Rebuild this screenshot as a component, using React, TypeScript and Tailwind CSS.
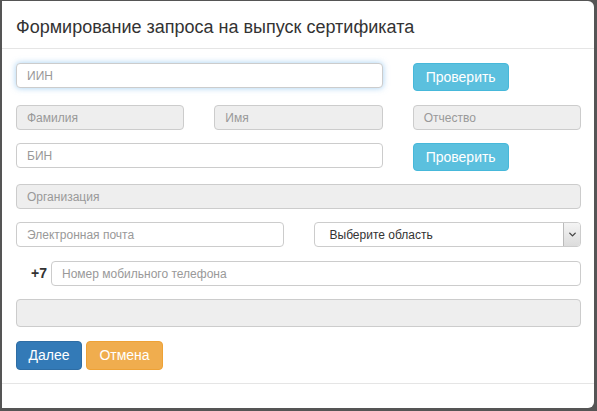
import { ChevronDown } from 'lucide-react';

const font = { fontFamily: '"Liberation Sans", Arial, sans-serif' };

function Field({ placeholder, disabled, focus, className = '' }: { placeholder?: string; disabled?: boolean; focus?: boolean; className?: string }) {
    return (
        <div
            className={
                'h-[25px] rounded-[4px] border px-[10px] flex items-center text-[12px] text-[#999] ' +
                (disabled ? 'bg-[#eeeeee] border-[#cccccc] ' : 'bg-white border-[#cccccc] ') +
                (focus ? 'border-[#66afe9] shadow-[0_0_6px_rgba(102,175,233,0.6)] ' : '') +
                className
            }
        >
            {placeholder}
        </div>
    );
}

function CheckButton() {
    return (
        <button className="w-[96px] h-[28px] rounded-[4px] bg-[#5bc0de] border border-[#46b8da] text-white text-[14px]">
            Проверить
        </button>
    );
}

export default function App() {
    return (
        <div className="w-[597px] h-[411px] bg-[#555555] pt-[1px] pl-[2px]" style={font}>
            <div className="w-[592px] h-[407px] bg-white rounded-r-[6px] flex flex-col">
                {/* Header */}
                <div className="h-[48px] border-b border-[#e5e5e5] flex items-center pl-[14px] pt-[5px]">
                    <h4 className="text-[18px] text-[#333333]">Формирование запроса на выпуск сертификата</h4>
                </div>

                {/* Body */}
                <div className="pl-[14px] pr-[13px] pt-[14px] flex flex-col">
                    <div className="grid grid-cols-3 gap-x-[30px] items-start">
                        <Field placeholder="ИИН" focus className="col-span-2" />
                        <CheckButton />
                    </div>
                    <div className="grid grid-cols-3 gap-x-[30px] mt-[14px]">
                        <Field placeholder="Фамилия" disabled />
                        <Field placeholder="Имя" disabled />
                        <Field placeholder="Отчество" disabled />
                    </div>
                    <div className="grid grid-cols-3 gap-x-[30px] items-start mt-[13px]">
                        <Field placeholder="БИН" className="col-span-2" />
                        <CheckButton />
                    </div>
                    <Field placeholder="Организация" disabled className="mt-[13px]" />
                    <div className="grid grid-cols-2 gap-x-[30px] mt-[13px]">
                        <Field placeholder="Электронная почта" />
                        <div className="h-[25px] rounded-[4px] border border-[#cccccc] bg-white flex items-center">
                            <span className="flex-1 pl-[15px] text-[12px] text-[#333333]">Выберите область</span>
                            <span className="w-[17px] h-[23px] border-l border-[#bbbbbb] bg-gradient-to-b from-[#f4f4f4] to-[#dcdcdc] rounded-r-[3px] flex items-center justify-center">
                                <ChevronDown className="w-[11px] h-[11px] text-[#444]" strokeWidth={3} />
                            </span>
                        </div>
                    </div>
                    <div className="flex items-center mt-[14px]">
                        <span className="w-[35px] pr-[4px] text-right text-[14px] font-bold text-[#333333]">+7</span>
                        <Field placeholder="Номер мобильного телефона" className="flex-1" />
                    </div>
                    <div className="h-[28px] rounded-[4px] border border-[#cccccc] bg-[#eeeeee] mt-[13px]" />
                    <div className="flex gap-[4px] mt-[14px]">
                        <button className="w-[66px] h-[29px] rounded-[4px] bg-[#337ab7] border border-[#2e6da4] text-white text-[14px]">
                            Далее
                        </button>
                        <button className="w-[77px] h-[29px] rounded-[4px] bg-[#f0ad4e] border border-[#eea236] text-white text-[14px]">
                            Отмена
                        </button>
                    </div>
                </div>

                {/* Footer */}
                <div className="mt-[13px] border-t border-[#e5e5e5] flex-1" />
            </div>
        </div>
    );
}
